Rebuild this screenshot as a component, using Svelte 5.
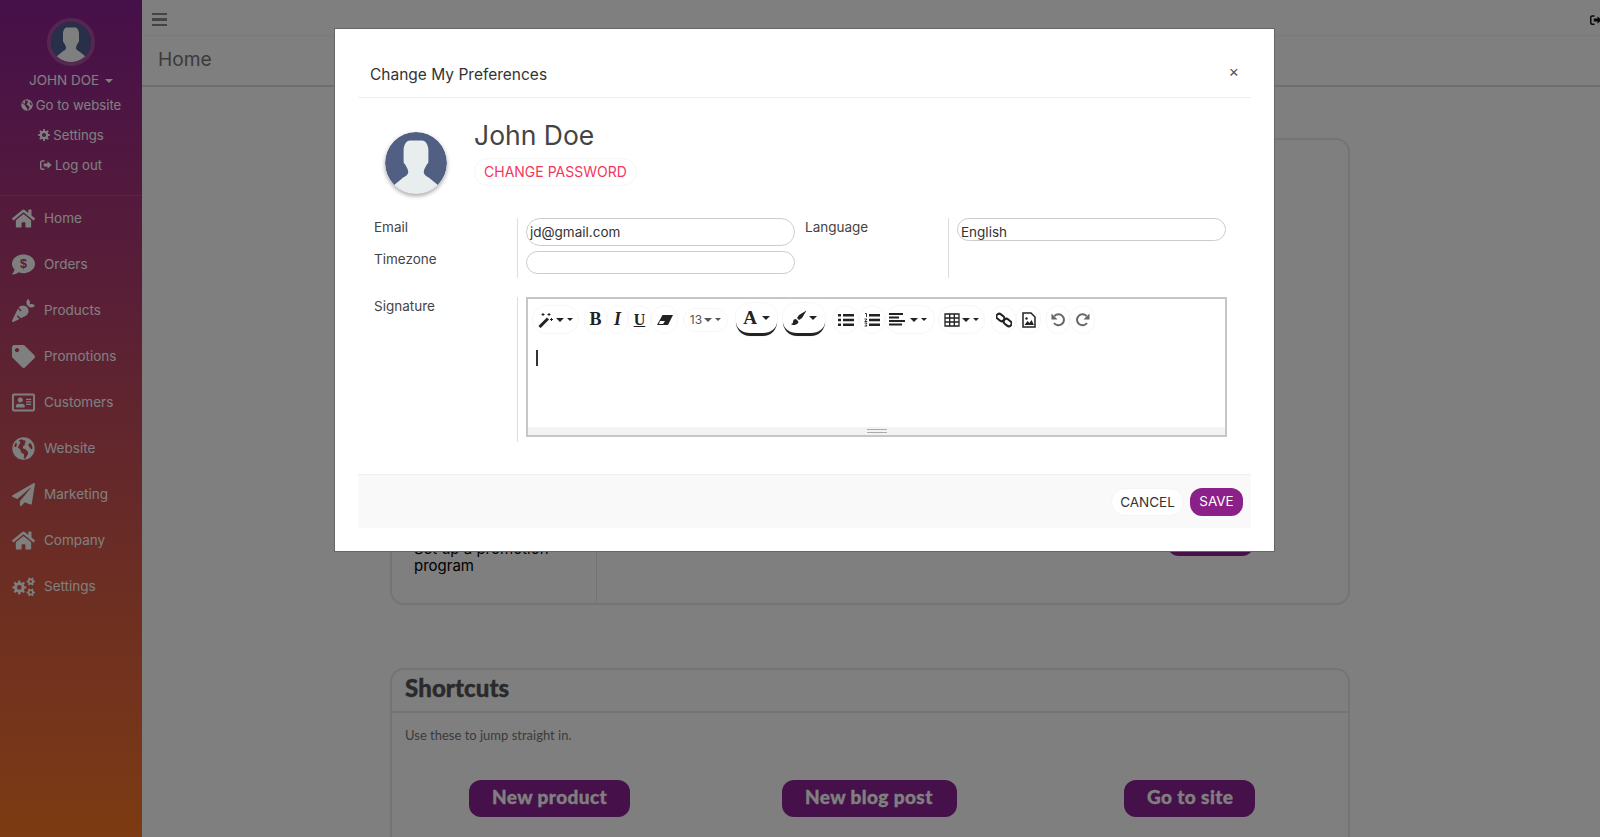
<script lang="ts">
  // gear outline, used by both settings icons
  function gear(cx: number, cy: number, R: number, r: number, hole: number, teeth = 8) {
    const pts: string[] = [];
    const step = (Math.PI * 2) / teeth;
    for (let i = 0; i < teeth; i++) {
      const a = i * step;
      const corners: [number, number][] = [
        [r, a - step * 0.32],
        [R, a - step * 0.17],
        [R, a + step * 0.17],
        [r, a + step * 0.32]
      ];
      for (const [rad, t] of corners) {
        pts.push(`${(cx + rad * Math.cos(t)).toFixed(2)} ${(cy + rad * Math.sin(t)).toFixed(2)}`);
      }
    }
    const h = `M${cx - hole} ${cy}a${hole} ${hole} 0 1 0 ${hole * 2} 0a${hole} ${hole} 0 1 0 ${-hole * 2} 0z`;
    return `M${pts.join("L")}z${h}`;
  }

  const home =
    "M280.37 148.26L96 300.11V464a16 16 0 0 0 16 16l112.06-.29a16 16 0 0 0 15.92-16V368a16 16 0 0 1 16-16h64a16 16 0 0 1 16 16v95.64a16 16 0 0 0 16 16.05L464 480a16 16 0 0 0 16-16V300L295.67 148.26a12.19 12.19 0 0 0-15.3 0zM571.6 251.47L488 182.56V44.05a12 12 0 0 0-12-12h-56a12 12 0 0 0-12 12v72.61L318.47 43a48 48 0 0 0-61 0L4.34 251.47a12 12 0 0 0-1.6 16.9l25.5 31A12 12 0 0 0 45.15 301l235.22-193.74a12.19 12.19 0 0 1 15.3 0L530.9 301a12 12 0 0 0 16.9-1.6l25.5-31a12 12 0 0 0-1.7-16.93z";
  const bubble =
    "M256 32C114.6 32 0 125.1 0 240c0 49.6 21.4 95 57 130.7C44.5 421.1 2.7 466 2.2 466.5c-2.2 2.3-2.8 5.7-1.5 8.7S4.8 480 8 480c66.3 0 116-31.8 140.6-51.4 32.7 12.3 69 19.4 107.4 19.4 141.4 0 256-93.1 256-208S397.4 32 256 32z";
  const carrot =
    "M298.2 156.6c-52.7-25.7-114.5-10.5-150.2 32.8l55.2 55.2c6.3 6.3 6.3 16.4 0 22.6-3.1 3.1-7.2 4.7-11.3 4.7s-8.2-1.6-11.3-4.7L130.4 217 2.3 479.7c-2.9 6-3.1 13.3 0 19.7 5.4 11.1 18.9 15.7 30 10.3l133.6-65.2-49.2-49.2c-6.2-6.2-6.2-16.4 0-22.6 6.3-6.2 16.4-6.2 22.6 0l57 57 102-49.8c24-11.7 44.5-31.3 57.1-57.1 30.1-61.7 4.5-136.1-57.2-166.2zm92.1-34.9C409.8 81 399.8 32.9 360 0c-50.3 41.5-52.5 107.5-7.9 151.9l8 8c44.4 44.6 110.3 42.4 151.9-7.9-32.9-39.8-81-49.8-121.7-30.3z";
  const tag =
    "M0 252.118V48C0 21.49 21.49 0 48 0h204.118a48 48 0 0 1 33.941 14.059l211.882 211.882c18.745 18.745 18.745 49.137 0 67.882L293.823 497.941c-18.745 18.745-49.137 18.745-67.882 0L14.059 286.059A48 48 0 0 1 0 252.118zM112 64c-26.51 0-48 21.49-48 48s21.49 48 48 48 48-21.49 48-48-21.49-48-48-48z";
  const card =
    "M528 32H48C21.5 32 0 53.5 0 80v352c0 26.5 21.5 48 48 48h480c26.5 0 48-21.5 48-48V80c0-26.5-21.5-48-48-48zm0 400H48V80h480v352zM208 256c35.3 0 64-28.7 64-64s-28.7-64-64-64-64 28.7-64 64 28.7 64 64 64zm-89.6 128h179.2c12.4 0 22.4-8.6 22.4-19.2v-19.2c0-31.8-30.1-57.6-67.2-57.6-10.8 0-18.7 8-44.8 8-26.9 0-33.4-8-44.8-8-37.1 0-67.2 25.8-67.2 57.6v19.2c0 10.6 10 19.2 22.4 19.2zM360 320h112c4.4 0 8-3.6 8-8v-16c0-4.4-3.6-8-8-8H360c-4.4 0-8 3.6-8 8v16c0 4.4 3.6 8 8 8zm0-64h112c4.4 0 8-3.6 8-8v-16c0-4.4-3.6-8-8-8H360c-4.4 0-8 3.6-8 8v16c0 4.4 3.6 8 8 8zm0-64h112c4.4 0 8-3.6 8-8v-16c0-4.4-3.6-8-8-8H360c-4.4 0-8 3.6-8 8v16c0 4.4 3.6 8 8 8z";
  const globe =
    "M256 8a248 248 0 1 0 0 496a248 248 0 1 0 0-496zM150 70l70-20 40 30 30-10 20 40-30 30 10 30-40 30-10 50 60 20 50 50 10 60-40 60-30 50-30-30 10-70-70-50-10-50-60-60 30-60 30-50zM400 130l40 50 20 70-30 30-40-50-30-60zM90 120l20 50-20 60-40-20 10-50z";
  const plane =
    "M476 3.2L12.5 270.6c-18.1 10.4-15.8 35.6 2.2 43.2L121 358.4l287.3-253.2c5.5-4.9 13.3 2.6 8.6 8.3L176 407v80.5c0 23.6 28.5 32.9 42.5 15.8L282 426l124.6 52.2c14.2 6 30.4-2.9 33-18.2l72-432C515 7.8 493.3-6.8 476 3.2z";
  const cogs =
    gear(190, 280, 185, 135, 62) + gear(490, 125, 110, 78, 34, 6) + gear(490, 410, 110, 78, 34, 6);
  const person =
    "M12 12c0-4 2-6.500 4-6.500h8c2 0 4 2.500 4 6.500v7c0 1-1 2-1 2-1 2-2 3-2 5 0 2 3 3 4 4l5.500 4.500c-4 3.500-8 5.500-14.500 5.500s-10.500-2-14.500-5.500L11 30c1-1 4-2 4-4 0-2-1-3-2-5 0 0-1-1-1-2z";

  const navItems = [
    { label: "Home", d: home, box: "0 0 576 512" },
    { label: "Orders", d: bubble, box: "0 0 512 512", dollar: true },
    { label: "Products", d: carrot, box: "0 0 512 512" },
    { label: "Promotions", d: tag, box: "0 0 512 512" },
    { label: "Customers", d: card, box: "0 0 576 512" },
    { label: "Website", d: globe, box: "0 0 512 512" },
    { label: "Marketing", d: plane, box: "0 0 512 512" },
    { label: "Company", d: home, box: "0 0 576 512" },
    { label: "Settings", d: cogs, box: "0 0 600 512" }
  ];
</script>

{#snippet logout()}
  <svg class="mini" viewBox="0 0 16 14">
    <path d="M6 1.5H3A2 2 0 0 0 1 3.500v7a2 2 0 0 0 2 2h3" fill="none" stroke="currentColor" stroke-width="2" />
    <path d="M5 5h5V2l5.500 5L10 12V9H5z" fill="currentColor" />
  </svg>
{/snippet}

{#snippet caret(small = false)}
  <i class="caret" class:small></i>
{/snippet}

<div class="page">
  <aside class="sidebar">
    <div class="user">
      <div class="user-avatar">
        <svg viewBox="0 0 40 40">
          <circle cx="20" cy="20" r="20" />
          <path d={person} />
        </svg>
      </div>
      <div class="user-name">JOHN DOE {@render caret()}</div>
      <a class="user-link">
        <svg class="mini" viewBox="0 0 512 512"><path d={globe} fill="currentColor" fill-rule="evenodd" /></svg>
        Go to website
      </a>
      <a class="user-link">
        <svg class="mini" viewBox="0 0 24 24"><path d={gear(12, 12, 12, 8.500, 4)} fill="currentColor" fill-rule="evenodd" /></svg>
        Settings
      </a>
      <a class="user-link">{@render logout()} Log out</a>
    </div>
    <nav class="nav">
      {#each navItems as item}
        <a class="nav-item">
          <svg class="nav-icon" viewBox={item.box}>
            <path d={item.d} fill="currentColor" fill-rule="evenodd" />
            {#if item.dollar}
              <text class="dollar" x="256" y="335" text-anchor="middle">$</text>
            {/if}
          </svg>
          <span>{item.label}</span>
        </a>
      {/each}
    </nav>
  </aside>

  <main class="main">
    <header class="topbar">
      <span class="burger"><i></i><i></i><i></i></span>
      <span class="top-logout">{@render logout()}</span>
    </header>
    <div class="titlebar">Home</div>

    <section class="panel steps">
      <div class="steps-left"><p>Set up a promotion program</p></div>
      <div class="steps-right"><span class="steps-btn"></span></div>
    </section>

    <section class="panel shortcuts">
      <h2>Shortcuts</h2>
      <p>Use these to jump straight in.</p>
      <div class="shortcut-row">
        <a class="shortcut">New product</a>
        <a class="shortcut">New blog post</a>
        <a class="shortcut">Go to site</a>
      </div>
    </section>
  </main>
</div>

<div class="backdrop"></div>

<div class="modal">
  <header class="modal-head">
    <h3>Change My Preferences</h3>
    <span class="close">×</span>
  </header>

  <div class="profile">
    <div class="profile-avatar">
      <svg viewBox="0 0 40 40">
        <circle cx="20" cy="20" r="20" fill="#505f82" />
        <path d={person} fill="#e8eded" />
      </svg>
    </div>
    <div>
      <div class="profile-name">John Doe</div>
      <a class="change-pw">CHANGE PASSWORD</a>
    </div>
  </div>

  <div class="form">
    <label class="form-label email">Email</label>
    <div class="field"><div class="input tall">jd@gmail.com</div></div>
    <label class="form-label lang">Language</label>
    <div class="field lang-field"><div class="input clip">English</div></div>
    <label class="form-label tz">Timezone</label>
    <div class="field"><div class="input short"></div></div>

    <label class="form-label sig">Signature</label>
    <div class="field sig-field">
      <div class="editor">
        <div class="toolbar">
          <span class="tb t-wand">
            <svg viewBox="0 0 16 16"><path d="M1.500 15 10 6.500" stroke="currentColor" stroke-width="3" /><path d="M11 1v3M9.500 2.500h3M5 1v3M3.500 2.500h3M13.500 6v3M12 7.500h3" stroke="currentColor" stroke-width="1" /></svg>
            {@render caret()}{@render caret(true)}
          </span>
          <span class="tb letter t-b">B</span>
          <span class="tb letter it t-i">I</span>
          <span class="tb letter und t-u">U</span>
          <span class="tb t-eraser">
            <svg viewBox="0 0 16 14"><path d="M5.500 2H16l-5 10H0z" fill="currentColor" /><path d="M3 8h5l-2 3H2z" fill="#fff" /></svg>
          </span>
          <span class="tb size">13 {@render caret()}{@render caret(true)}</span>
          <span class="tb color t-a"><b>A</b> {@render caret()}</span>
          <span class="tb color t-brush">
            <svg viewBox="0 0 16 16"><path d="M15.500 .5 8 5 6 8l2 2 3-2zM5 9c-2 0-3 1-3 3 0 1-1 2-2 2 1 1 3 1.500 5 .5 2-1 3-2 2-3.500z" fill="currentColor" /></svg>
            {@render caret()}
          </span>
          <span class="tb t-ul">
            <svg viewBox="0 0 16 14"><path d="M0 1h3v2.500H0zM0 5.750h3v2.500H0zM0 10.500h3V13H0zM5 1h11v2.500H5zM5 5.750h11v2.500H5zM5 10.500h11V13H5z" fill="currentColor" /></svg>
          </span>
          <span class="tb t-ol">
            <svg viewBox="0 0 16 14"><path d="M5 1h11v2.500H5zM5 5.750h11v2.500H5zM5 10.500h11V13H5z" fill="currentColor" /><path d="M1 .5h1.500v3.500M.5 6h2.500L.8 8.500h2.400M.5 10h2.500l-1 1.500 1 1.500H.5" fill="none" stroke="currentColor" stroke-width=".9" /></svg>
          </span>
          <span class="tb t-align">
            <svg viewBox="0 0 16 14"><path d="M0 0h14v2H0zM0 3.500h10v2H0zM0 7h16v2H0zM0 10.500h13v2H0z" fill="currentColor" /></svg>
            {@render caret()}{@render caret(true)}
          </span>
          <span class="tb t-table">
            <svg viewBox="0 0 16 14"><path d="M1 1h14v12H1zM1 5h14M1 9h14M5.700 1v12M10.300 1v12" fill="none" stroke="currentColor" stroke-width="1.300" /></svg>
            {@render caret()}{@render caret(true)}
          </span>
          <span class="tb t-link">
            <svg viewBox="0 0 16 16"><rect x="0" y="2.500" width="8.500" height="5.500" rx="2.700" transform="rotate(40 4 5.500)" fill="none" stroke="currentColor" stroke-width="2" /><rect x="7.500" y="8" width="8.500" height="5.500" rx="2.700" transform="rotate(40 12 10.500)" fill="none" stroke="currentColor" stroke-width="2" /></svg>
          </span>
          <span class="tb t-pic">
            <svg viewBox="0 0 14 16"><path d="M1 1h8l4 4v10H1z" fill="none" stroke="currentColor" stroke-width="1.500" /><path d="M2.500 13l3-4 2 2 2-3 2.500 5z" fill="currentColor" /><circle cx="4.500" cy="6.500" r="1.200" fill="currentColor" /></svg>
          </span>
          <span class="tb hist t-undo">
            <svg viewBox="0 0 16 16"><path d="M4 11a5.500 5.500 0 1 0 .5-7" fill="none" stroke="currentColor" stroke-width="2" /><path d="M1.500 1.500v6h6z" fill="currentColor" /></svg>
          </span>
          <span class="tb hist t-redo">
            <svg viewBox="0 0 16 16"><path d="M12 11a5.500 5.500 0 1 1-.5-7" fill="none" stroke="currentColor" stroke-width="2" /><path d="M14.500 1.500v6h-6z" fill="currentColor" /></svg>
          </span>
        </div>
        <div class="editor-body"><i class="cursor"></i></div>
        <div class="statusbar"><i></i></div>
      </div>
    </div>
  </div>

  <footer class="modal-foot">
    <a class="btn cancel">CANCEL</a>
    <a class="btn save">SAVE</a>
  </footer>
</div>

<style>
  :global(body) {
    margin: 0;
    background: #fff;
    font-family: Inter, "Liberation Sans", sans-serif;
    color: #333;
    overflow: hidden;
  }

  .page {
    display: flex;
    height: 837px;
    overflow: hidden;
  }

  /* sidebar */
  .sidebar {
    width: 142px;
    flex-shrink: 0;
    background: linear-gradient(180deg, #8c2094, #fa7626);
    color: #fff;
    font-size: 13.5px;
  }

  .user {
    display: flex;
    flex-direction: column;
    align-items: center;
    padding-top: 18px;
    height: 177px;
    border-bottom: 1px solid rgba(255, 255, 255, 0.12);
  }

  .user-avatar {
    width: 40px;
    height: 40px;
    border: 4px solid rgba(255, 255, 255, 0.2);
    border-radius: 50%;
    overflow: hidden;
    flex-shrink: 0;
  }

  .user-avatar svg,
  .profile-avatar svg {
    display: block;
    width: 100%;
    height: 100%;
  }

  .user-avatar circle {
    fill: #4f6090;
  }

  .user-avatar path {
    fill: #fff;
  }

  .user-name {
    margin-top: 5px;
    line-height: 18px;
  }

  .user-link {
    display: flex;
    align-items: center;
    gap: 3px;
    height: 30px;
    line-height: 30px;
    font-size: 13.2px;
  }

  .user-name + .user-link {
    height: 22px;
    margin-top: 5px;
    margin-bottom: 4px;
  }

  .mini {
    width: 12px;
    height: 12px;
  }

  .caret {
    display: inline-block;
    width: 0;
    height: 0;
    margin-left: 2px;
    vertical-align: 2px;
    border: 4px solid transparent;
    border-top-color: currentColor;
    border-bottom: 0;
  }

  .caret.small {
    margin-left: 3px;
    vertical-align: 3px;
    border-width: 3px;
    border-bottom: 0;
  }

  .nav {
    margin-top: -1px;
  }

  .nav-item {
    display: flex;
    align-items: center;
    gap: 9px;
    height: 46px;
    padding-left: 12px;
  }

  .nav-icon {
    width: 23px;
    height: 23px;
    flex-shrink: 0;
  }

  .dollar {
    font: bold 280px "Liberation Sans", sans-serif;
    fill: #b83470;
  }

  /* page behind the dialog */
  .main {
    flex: 1;
    min-width: 0;
    overflow: hidden;
  }

  .topbar {
    display: flex;
    align-items: center;
    justify-content: space-between;
    height: 36px;
    padding: 4px 0 0 10px;
    box-sizing: border-box;
    border-bottom: 1px solid #f4f4f4;
  }

  .burger {
    display: flex;
    flex-direction: column;
    gap: 3px;
  }

  .burger i {
    display: block;
    width: 15px;
    height: 2.500px;
    background: #888;
  }

  .top-logout {
    color: #111;
    margin-right: -2px;
    line-height: 0;
  }

  .titlebar {
    height: 51px;
    box-sizing: border-box;
    padding: 12px 16px;
    border-bottom: 2px solid #ddd;
    font-size: 19.200px;
    line-height: 22px;
    color: #777;
  }

  .panel {
    width: 960px;
    margin-left: 248px;
    box-sizing: border-box;
    border: 2px solid #e8e8e8;
    border-radius: 14px;
  }

  .steps {
    display: flex;
    height: 467px;
    margin-top: 51px;
  }

  .steps-left {
    width: 205px;
    display: flex;
    align-items: flex-end;
    box-sizing: border-box;
    padding: 0 22px 29px;
    border-right: 1px solid #e8e8e8;
  }

  .steps-left p {
    margin: 0;
    font-size: 15px;
    line-height: 17px;
    color: #000;
  }

  .steps-right {
    flex: 1;
    display: flex;
    align-items: flex-end;
    justify-content: flex-end;
    padding: 0 94px 47px 0;
  }

  .steps-btn {
    width: 87px;
    height: 30px;
    border-radius: 0 0 12px 12px;
    background: #8c2094;
  }

  .shortcuts {
    margin-top: 63px;
    height: 240px;
  }

  .shortcuts h2 {
    margin: 0;
    height: 41px;
    padding-left: 13px;
    border-bottom: 2px solid #e8e8e8;
    font: 900 24px/36px Lato, sans-serif;
    -webkit-text-stroke: 0.4px #555;
    letter-spacing: 0.1px;
    color: #555;
  }

  .shortcuts p {
    margin: 14px 0 0 13px;
    font: 13px/17px Lato, sans-serif;
    color: #777;
  }

  .shortcut-row {
    display: flex;
    margin: 36px 0 0 77px;
  }

  .shortcut {
    display: block;
    box-sizing: border-box;
    height: 37px;
    padding: 0 23px;
    border-radius: 12px;
    background: #8c2094;
    font: 900 19px/34px Lato, sans-serif;
    letter-spacing: 0.4px;
    -webkit-text-stroke: 0.3px #fff;
    color: #fff;
    white-space: nowrap;
  }

  .shortcut:nth-child(1) {
    width: 161px;
    margin-right: 152px;
  }

  .shortcut:nth-child(2) {
    width: 175px;
    margin-right: 167px;
  }

  .shortcut:nth-child(3) {
    width: 131px;
  }

  .backdrop {
    position: fixed;
    inset: 0;
    background: rgba(0, 0, 0, 0.5);
  }

  /* dialog */
  .modal {
    position: fixed;
    top: 28px;
    left: 334px;
    width: 941px;
    height: 524px;
    box-sizing: border-box;
    padding: 0 23px;
    background: #fff;
    border: 1px solid #666;
  }

  .modal-head {
    display: flex;
    justify-content: space-between;
    align-items: center;
    height: 69px;
    box-sizing: border-box;
    padding: 22px 12px 0 12px;
    border-bottom: 1px solid #eee;
  }

  .modal-head h3 {
    margin: 0;
    font-size: 15.500px;
    font-weight: 400;
    color: #333;
  }

  .close {
    font-size: 16px;
    color: #555;
    margin-top: -6px;
  }

  .profile {
    display: flex;
    gap: 27px;
    height: 120px;
    padding: 22px 0 0 27px;
    box-sizing: border-box;
  }

  .profile-avatar {
    width: 62px;
    height: 62px;
    margin-top: 12px;
    border-radius: 50%;
    overflow: hidden;
    box-shadow: 0 2px 4px rgba(0, 0, 0, 0.35);
  }

  .profile-name {
    font-size: 26.500px;
    line-height: 30px;
    color: #444;
  }

  .change-pw {
    display: inline-block;
    margin-top: 8px;
    padding: 0 9px;
    font-size: 14px;
    line-height: 26px;
    color: #f5365c;
    border: 1px solid #f6f6f6;
    border-radius: 14px;
  }

  .form {
    display: grid;
    grid-template-columns: 143px 288px 143px 279px;
    grid-template-rows: 32px 28px auto;
    margin-left: 16px;
    font-size: 13.500px;
  }

  .form-label {
    color: #444;
    line-height: 18px;
  }

  .form-label.email {
    grid-area: 1 / 1;
  }

  .form-label.tz {
    grid-area: 2 / 1;
  }

  .form-label.lang {
    grid-area: 1 / 3;
  }

  .form-label.sig {
    grid-area: 3 / 1;
    margin-top: 19px;
  }

  .field {
    border-left: 1px solid #ddd;
    padding-left: 8px;
  }

  .lang-field {
    grid-area: 1 / 4 / 3 / 5;
  }

  .sig-field {
    grid-area: 3 / 2 / 4 / 5;
    margin-top: 19px;
    padding-bottom: 5px;
  }

  .input {
    box-sizing: border-box;
    width: 269px;
    border: 1.500px solid #ccc;
    border-radius: 14px;
    padding: 0 3px;
    overflow: hidden;
    color: #333;
  }

  .input.tall {
    height: 28px;
    line-height: 26px;
  }

  .input.short {
    height: 23px;
    margin-top: 1px;
  }

  .input.clip {
    height: 23px;
    line-height: 26px;
  }

  .editor {
    height: 140px;
    box-sizing: border-box;
    border: 2px solid #c6c6c6;
    display: flex;
    flex-direction: column;
  }

  .toolbar {
    display: flex;
    align-items: center;
    height: 36px;
    padding: 5px 0 0 4px;
    box-sizing: border-box;
    color: #222;
  }

  .tb {
    display: flex;
    align-items: center;
    justify-content: center;
    box-sizing: border-box;
    height: 29px;
    border: 1px solid #f7f7f7;
    border-radius: 14px;
    flex-shrink: 0;
  }

  .tb svg {
    width: 16px;
    height: 16px;
  }

  .t-wand {
    width: 47px;
  }

  .t-b {
    width: 23px;
    margin-left: 5px;
  }

  .t-i {
    width: 21px;
  }

  .t-u {
    width: 23px;
  }

  .t-eraser {
    width: 27px;
  }

  .t-a {
    width: 41px;
    margin-left: 8px;
  }

  .t-brush {
    width: 42px;
    margin-left: 6px;
  }

  .t-ul {
    width: 27px;
    margin-left: 7px;
  }

  .t-ol {
    width: 26px;
  }

  .t-align {
    width: 50px;
  }

  .t-align svg {
    margin-left: -5px;
    margin-right: 3px;
  }

  .t-table {
    width: 47px;
    margin-left: 3px;
  }

  .t-link {
    width: 25px;
    margin-left: 6px;
  }

  .t-pic {
    width: 25px;
  }

  .t-undo {
    width: 24px;
    margin-left: 5px;
  }

  .t-redo {
    width: 25px;
  }

  .tb.letter {
    font: bold 18px "Liberation Serif", serif;
  }

  .tb.it {
    font-style: italic;
  }

  .tb.und {
    text-decoration: underline;
    font-size: 16px;
  }

  .tb.size {
    width: 45px;
    height: 24px;
    margin-left: 5px;
    font-size: 12px;
    color: #555;
  }

  .tb.color {
    height: 33px;
    border: 0;
    border-bottom: 3px solid #222;
    box-shadow: 0 0 0 1px #f7f7f7;
  }

  .tb.color b {
    font: bold 19px "Liberation Serif", serif;
    margin-right: 3px;
  }

  .tb.hist {
    color: #666;
  }

  .editor-body {
    flex: 1;
    padding: 15px 8px 0;
  }

  .cursor {
    display: block;
    width: 1.500px;
    height: 16px;
    background: #333;
  }

  .statusbar {
    height: 8px;
    background: #f3f3f3;
    position: relative;
  }

  .statusbar i {
    position: absolute;
    left: 339px;
    top: 2px;
    width: 20px;
    height: 4px;
    border-top: 1px solid #aaa;
    border-bottom: 1px solid #aaa;
    box-sizing: border-box;
  }

  .modal-foot {
    display: flex;
    justify-content: flex-end;
    align-items: center;
    gap: 6px;
    margin-top: 32px;
    height: 54px;
    box-sizing: border-box;
    padding-right: 8px;
    background: #f9f9f9;
    border-top: 1px solid #eee;
  }

  .btn {
    display: block;
    height: 28px;
    line-height: 27px;
    font-size: 13.500px;
    text-align: center;
    box-sizing: border-box;
  }

  .btn.cancel {
    width: 73px;
    background: #fff;
    color: #333;
    border: 1px solid #f5f5f5;
    border-radius: 14px;
  }

  .btn.save {
    width: 53px;
    background: #8c2089;
    color: #fff;
    border-radius: 12px;
  }
</style>
